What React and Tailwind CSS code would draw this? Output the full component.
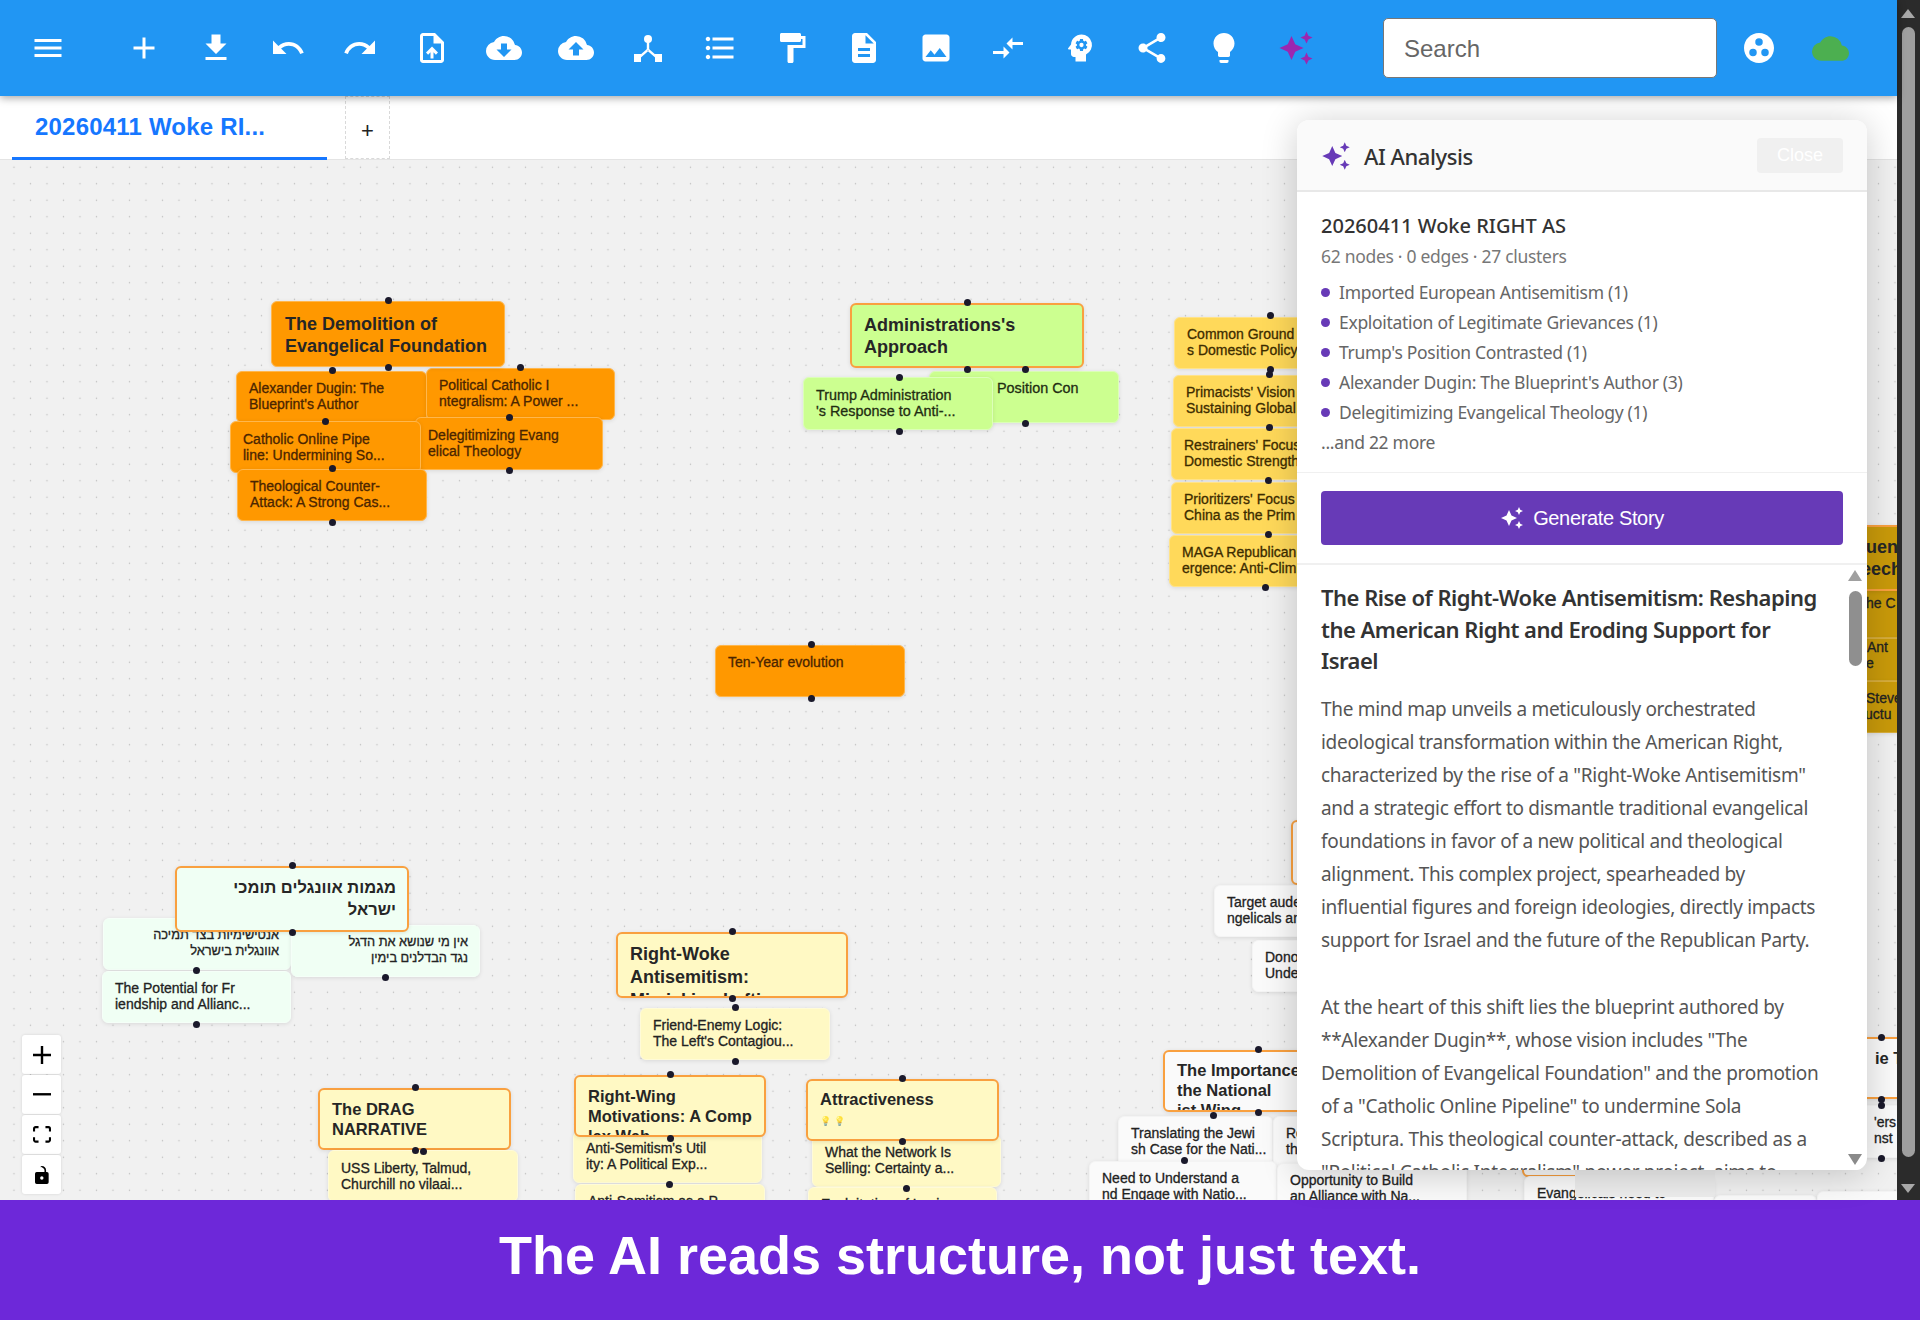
import {
  MdMenu, MdAdd, MdFileDownload, MdUndo, MdRedo, MdOutlineUploadFile, MdCloudDownload, MdCloudUpload,
  MdFormatListBulleted, MdFormatPaint, MdDescription, MdImage, MdCompareArrows, MdPsychology, MdShare,
  MdLightbulb, MdAutoAwesome, MdGroupWork, MdCloud,
} from 'react-icons/md'

const ORANGE = 'bg-[#ff9800] text-[#4a2500] border-[#ffb74d]'
const GREEN = 'bg-[#ccff90] text-[#1f2d12] border-[#dcffb8]'
const AMBER = 'bg-[#ffd95a] text-[#3d2c00] border-[#ffe38a]'
const MINT = 'bg-[#f0fff4] text-[#222] border-[#f5fff8]'
const CREAM = 'bg-[#fff9c4] text-[#222] border-[#fffbd8]'
const PALE = 'bg-[#fafafa] text-[#222] border-[#f4f4f4]'
const GOLD = 'bg-[#c99a0a] text-[#222] border-[#d8ae3c]'

// page coordinates, minus 160 when drawn
const nodes = [
  { x: 236, y: 371, w: 191, h: 52, c: ORANGE, t: ['Alexander Dugin: The', "Blueprint's Author"] },
  { x: 426, y: 368, w: 189, h: 52, c: ORANGE, t: ['Political Catholic I', 'ntegralism: A Power ...'] },
  { x: 415, y: 417, w: 188, h: 53, c: ORANGE, pt: 9, t: ['Delegitimizing Evang', 'elical Theology'] },
  { x: 230, y: 421, w: 191, h: 52, c: ORANGE, pt: 9, t: ['Catholic Online Pipe', 'line: Undermining So...'] },
  { x: 237, y: 469, w: 190, h: 52, c: ORANGE, t: ['Theological Counter-', 'Attack: A Strong Cas...'] },
  { x: 271, y: 301, w: 234, h: 66, c: ORANGE, big: 18, lh: 22, t: ['The Demolition of', 'Evangelical Foundation'] },

  { x: 929, y: 371, w: 190, h: 52, c: GREEN, fs: 14.4, t: ["Trump's Position Con", 'trasted'] },
  { x: 803, y: 377, w: 190, h: 53, c: GREEN, fs: 14.4, pt: 9, t: ['Trump Administration', "'s Response to Anti-..."] },
  { x: 850, y: 303, w: 234, h: 65, c: GREEN, big: 18, lh: 22, sel: true, t: ["Administrations's", 'Approach'] },

  { x: 1174, y: 317, w: 190, h: 52, c: AMBER, t: ['Common Ground', 's Domestic Policy'] },
  { x: 1173, y: 375, w: 190, h: 52, c: AMBER, t: ["Primacists' Vision", 'Sustaining Global'] },
  { x: 1171, y: 428, w: 190, h: 52, c: AMBER, t: ["Restrainers' Focus", 'Domestic Strength'] },
  { x: 1171, y: 482, w: 190, h: 52, c: AMBER, t: ["Prioritizers' Focus", 'China as the Prim'] },
  { x: 1169, y: 535, w: 190, h: 52, c: AMBER, t: ['MAGA Republican', 'ergence: Anti-Clim'] },

  { x: 715, y: 645, w: 190, h: 52, c: ORANGE, t: ['Ten-Year evolution'] },

  { x: 103, y: 918, w: 188, h: 52, c: MINT, rtl: true, fs: 12.8, pr: 11, t: ['אנטישימיות בצד תמיכה', 'אוונגלית בישראל'] },
  { x: 291, y: 925, w: 189, h: 52, c: MINT, rtl: true, fs: 12.8, pr: 11, t: ['אין מי שנושא את הדגל', 'נגד הבדלנים בימין'] },
  { x: 102, y: 971, w: 189, h: 52, c: MINT, t: ['The Potential for Fr', 'iendship and Allianc...'] },
  { x: 175, y: 866, w: 234, h: 66, c: MINT, big: 18, fs: 16.5, lh: 22, sel: true, rtl: true, pt: 8, pr: 11, t: ['מגמות אוונגלים תומכי', 'ישראל'] },

  { x: 616, y: 932, w: 232, h: 66, c: CREAM, big: 18, lh: 23, sel: true, t: ['Right-Woke', 'Antisemitism:', 'Mimicking Lefti'] },
  { x: 640, y: 1008, w: 190, h: 52, c: CREAM, t: ['Friend-Enemy Logic:', "The Left's Contagiou..."] },
  { x: 573, y: 1131, w: 189, h: 52, c: CREAM, t: ["Anti-Semitism's Util", 'ity: A Political Exp...'] },
  { x: 575, y: 1184, w: 190, h: 52, c: CREAM, t: ['Anti-Semitism as a P', 'olitical Tool'] },
  { x: 574, y: 1075, w: 192, h: 62, c: CREAM, big: 16.5, lh: 20, sel: true, t: ['Right-Wing', 'Motivations: A Comp', 'lex Web'] },
  { x: 812, y: 1135, w: 189, h: 52, c: CREAM, t: ['What the Network Is', 'Selling: Certainty a...'] },
  { x: 808, y: 1187, w: 189, h: 52, c: CREAM, t: ['Exploitation of Logi', 'cal Fallacies'] },
  { x: 806, y: 1079, w: 193, h: 62, c: CREAM, big: 16.5, lh: 20, sel: true, pt: 8, bulbs: true, t: ['Attractiveness'] },
  { x: 318, y: 1088, w: 193, h: 62, c: CREAM, big: 16.5, lh: 20, sel: true, t: ['The DRAG', 'NARRATIVE'] },
  { x: 328, y: 1150, w: 190, h: 52, c: CREAM, pt: 9, t: ['USS Liberty, Talmud,', 'Churchill no vilaai...'] },

  { x: 1291, y: 820, w: 190, h: 65, c: PALE, big: 18, lh: 22, sel: true, t: [] },
  { x: 1214, y: 885, w: 190, h: 52, c: PALE, t: ['Target audence: Eva', 'ngelicals and'] },
  { x: 1252, y: 940, w: 190, h: 52, c: PALE, t: ['Donors and Elites', 'Under'] },
  { x: 1163, y: 1050, w: 234, h: 62, c: PALE, big: 16.5, lh: 20, sel: true, pt: 8, t: ['The Importance of', 'the National', 'ist Wing'] },
  { x: 1118, y: 1116, w: 155, h: 52, c: PALE, t: ['Translating the Jewi', 'sh Case for the Nati...'] },
  { x: 1273, y: 1116, w: 150, h: 52, c: PALE, t: ['Re', 'th'] },
  { x: 1089, y: 1161, w: 188, h: 52, c: PALE, t: ['Need to Understand a', 'nd Engage with Natio...'] },
  { x: 1277, y: 1163, w: 190, h: 52, c: PALE, t: ['Opportunity to Build', 'an Alliance with Na...'] },
  { x: 1522, y: 1115, w: 190, h: 62, c: PALE, big: 16.5, lh: 20, sel: true, t: [] },
  { x: 1524, y: 1176, w: 190, h: 52, c: PALE, t: ['Evangelicals need to'] },
  { x: 1575, y: 1140, w: 140, h: 57, flat: 'bg-[#ededed]', t: [] },
  { x: 1714, y: 1195, w: 103, h: 30, c: PALE, t: [] },
  { x: 1817, y: 1191, w: 90, h: 40, c: PALE, t: [] },

  { x: 1730, y: 590, w: 190, h: 48, c: GOLD, pt: 4, ind: [123], t: ['he C'] },
  { x: 1730, y: 638, w: 190, h: 43, c: GOLD, pt: 0, ind: [124, 123], t: ['Ant', 'e'] },
  { x: 1730, y: 681, w: 190, h: 52, c: GOLD, ind: [123, 122], t: ['Steve', 'uctu'] },
  { x: 1730, y: 525, w: 190, h: 66, c: GOLD, big: 18, lh: 22, sel: true, ind: [122, 117], t: ['uen', 'eech'] },

  { x: 1730, y: 1037, w: 190, h: 62, c: PALE, big: 16.5, lh: 20, sel: true, ind: [131], t: ['ie T'] },
  { x: 1730, y: 1105, w: 190, h: 53, c: PALE, ind: [131, 131], t: ["'ers", 'nst'] },
]

const handles = [
  [388, 300], [388, 367], [332, 370], [520, 367], [509, 417], [325, 421], [332, 468], [509, 470], [332, 522],
  [967, 302], [967, 369], [1025, 369], [1025, 423], [899, 377], [899, 431],
  [1270, 315], [1270, 369], [1269, 374], [1269, 427], [1268, 480], [1268, 534], [1265, 587],
  [811, 644], [811, 698],
  [292, 865], [292, 932], [196, 970], [385, 977], [196, 1024],
  [732, 931], [732, 998], [735, 1007], [735, 1061], [670, 1074], [670, 1138], [669, 1184],
  [902, 1078], [902, 1141], [906, 1188],
  [415, 1087], [415, 1150], [423, 1151],
  [1258, 1049], [1258, 1112], [1213, 1115], [1184, 1160],
  [1881, 1037], [1881, 1099], [1881, 1105], [1881, 1158],
]

const storyTitle = [
  'The Rise of Right-Woke Antisemitism: Reshaping',
  'the American Right and Eroding Support for',
  'Israel',
]

const firstPara = [
  'The mind map unveils a meticulously orchestrated',
  'ideological transformation within the American Right,',
  'characterized by the rise of a "Right-Woke Antisemitism"',
  'and a strategic effort to dismantle traditional evangelical',
  'foundations in favor of a new political and theological',
  'alignment. This complex project, spearheaded by',
  'influential figures and foreign ideologies, directly impacts',
  'support for Israel and the future of the Republican Party.',
]

const secondPara = [
  'At the heart of this shift lies the blueprint authored by',
  '**Alexander Dugin**, whose vision includes "The',
  'Demolition of Evangelical Foundation" and the promotion',
  'of a "Catholic Online Pipeline" to undermine Sola',
  'Scriptura. This theological counter-attack, described as a',
  '"Political Catholic Integralism" power project, aims to',
]

const clusters = [
  'Imported European Antisemitism (1)',
  'Exploitation of Legitimate Grievances (1)',
  "Trump's Position Contrasted (1)",
  "Alexander Dugin: The Blueprint's Author (3)",
  'Delegitimizing Evangelical Theology (1)',
]

function TreeIcon() {
  return (
    <svg viewBox="0 0 28 28" className="w-[28px] h-[28px]" fill="white">
      <circle cx="14" cy="5" r="4" />
      <rect x="12.8" y="6" width="2.4" height="10" />
      <path d="M13 15l-8 7 1.6 1.8 8-7zM15 15l8 7-1.6 1.8-8-7z" />
      <rect x="0" y="20" width="7" height="8" />
      <rect x="21" y="20" width="7" height="8" />
    </svg>
  )
}

function ToolIcon({ children }) {
  return <div className="w-[72px] h-[72px] flex items-center justify-center text-white text-[36px]">{children}</div>
}

function Toolbar() {
  return (
    <div className="relative z-20 h-[96px] bg-[#2196f3] flex items-center pl-[12px] shadow-[0_2px_8px_rgba(0,0,0,0.35)]">
      <ToolIcon><MdMenu /></ToolIcon>
      <div className="w-[24px]" />
      <ToolIcon><MdAdd /></ToolIcon>
      <ToolIcon><MdFileDownload /></ToolIcon>
      <ToolIcon><MdUndo /></ToolIcon>
      <ToolIcon><MdRedo /></ToolIcon>
      <ToolIcon><MdOutlineUploadFile /></ToolIcon>
      <ToolIcon><MdCloudDownload /></ToolIcon>
      <ToolIcon><MdCloudUpload /></ToolIcon>
      <ToolIcon><TreeIcon /></ToolIcon>
      <ToolIcon><MdFormatListBulleted /></ToolIcon>
      <ToolIcon><MdFormatPaint /></ToolIcon>
      <ToolIcon><MdDescription /></ToolIcon>
      <ToolIcon><MdImage /></ToolIcon>
      <ToolIcon><MdCompareArrows /></ToolIcon>
      <ToolIcon><MdPsychology /></ToolIcon>
      <ToolIcon><MdShare /></ToolIcon>
      <ToolIcon><MdLightbulb /></ToolIcon>
      <ToolIcon><MdAutoAwesome className="text-[#9c27b0]" /></ToolIcon>
      <input
        placeholder="Search"
        className="ml-[51px] w-[334px] h-[60px] rounded-[5px] border border-[#777] bg-white pl-[20px] pt-[2px] text-[24px] text-[#333] placeholder:text-[#666] outline-none"
      />
      <div className="w-[84px] flex justify-center text-white text-[36px]"><MdGroupWork /></div>
      <div className="w-[58px] flex justify-center text-[#4caf50] text-[37px]"><MdCloud /></div>
    </div>
  )
}

function TabBar() {
  return (
    <div className="relative h-[64px] bg-white flex pl-[12px] border-b border-[#e4e4e4]">
      <div className="w-[315px] h-[64px] border-b-[3px] border-[#1677ff] pl-[23px] pt-[16px] text-[24px] leading-[30px] font-bold text-[#1677ff] tracking-[0.2px]">
        20260411 Woke RI...
      </div>
      <div className="ml-[18px] w-[45px] h-[63px] border border-dashed border-[#d9d9d9] pt-[5px] flex items-center justify-center text-[22px] text-[#222]">
        +
      </div>
    </div>
  )
}

function FlowNode({ n }) {
  const lh = n.lh || 16
  const top = n.pt ?? (n.big ? (n.sel ? 9 : 11) : 8)
  const right = n.pr ?? 12
  const left = n.big && !n.sel ? 13 : 12
  const tone = n.big ? 'text-[#262626]!' : '[-webkit-text-stroke:0.3px]'
  return (
    <div
      className={`absolute overflow-hidden ${n.flat ? n.flat : `rounded-[6px] shadow-[0_1px_4px_rgba(0,0,0,0.1)] ${n.sel ? 'border-2 border-[#f9a03f]!' : 'border'} ${n.c} ${tone}`} ${n.rtl ? 'text-right' : ''}`}
      dir={n.rtl ? 'rtl' : undefined}
      style={{
        left: n.x,
        top: n.y - 160,
        width: n.w,
        height: n.h,
        fontSize: n.fs || n.big || 14,
        lineHeight: lh + 'px',
        fontWeight: n.big ? 700 : undefined,
        padding: `${top}px ${right}px 0 ${left}px`,
      }}
    >
      {n.t.map((line, i) => (
        <div key={line} className="whitespace-nowrap" style={n.ind ? { marginLeft: n.ind[i] } : undefined}>{line}</div>
      ))}
      {n.bulbs && <div className="mt-[6px] text-[9px] leading-[12px] opacity-70">💡 💡</div>}
    </div>
  )
}

function ZoomControls() {
  const btn = 'w-[39px] h-[39px] bg-white flex items-center justify-center rounded-[3px] shadow-[0_0_3px_rgba(0,0,0,0.12)]'
  return (
    <div className="absolute left-[22px] top-[875px] flex flex-col gap-px z-10">
      <div className={btn}>
        <svg viewBox="0 0 32 32" className="w-[18px] h-[18px]"><path d="M32 18.133H18.133V32h-4.266V18.133H0v-4.266h13.867V0h4.266v13.867H32z" /></svg>
      </div>
      <div className={btn}>
        <svg viewBox="0 0 32 5" className="w-[18px] h-[3px]"><path d="M0 0h32v4.2H0z" /></svg>
      </div>
      <div className={btn}>
        <svg viewBox="0 0 32 30" className="w-[18px] h-[17px]"><path d="M3.692 4.63c0-.53.4-.938.939-.938h5.215V0H4.708C2.13 0 0 2.054 0 4.63v5.216h3.692V4.631zM27.354 0h-5.2v3.692h5.17c.53 0 .984.4.984.939v5.215H32V4.631A4.624 4.624 0 0027.354 0zm.954 24.83c0 .532-.4.94-.939.94h-5.215v3.768h5.215c2.577 0 4.631-2.13 4.631-4.707v-5.139h-3.692v5.139zm-23.677.94c-.531 0-.939-.4-.939-.94v-5.138H0v5.139c0 2.577 2.13 4.707 4.708 4.707h5.138V25.77H4.631z" /></svg>
      </div>
      <div className={btn}>
        <svg viewBox="0 0 25 32" className="w-[14px] h-[18px]"><path d="M21.333 10.667H19.81V7.619C19.81 3.429 16.38 0 12.19 0c-4.114 1.828-1.37 2.133.305 2.438 1.676.305 4.42 2.59 4.42 5.181v3.048H3.047A3.056 3.056 0 000 13.714v15.238A3.056 3.056 0 003.048 32h18.285a3.056 3.056 0 003.048-3.048V13.714a3.056 3.056 0 00-3.048-3.047zM12.19 24.533a3.056 3.056 0 01-3.047-3.047 3.056 3.056 0 013.047-3.048 3.056 3.056 0 013.048 3.048 3.056 3.056 0 01-3.048 3.047z" /></svg>
      </div>
    </div>
  )
}

function AiPanel() {
  return (
    <div className="absolute z-10 left-[1297px] top-[120px] w-[570px] h-[1050px] bg-white rounded-[12px] overflow-hidden flex flex-col shadow-[0_4px_36px_rgba(0,0,0,0.2)] font-['Noto_Sans',sans-serif]">
      <div className="h-[72px] shrink-0 bg-[#fafafa] border-b-2 border-[#e8e8e8] flex items-center justify-between pl-[24px] pr-[24px]">
        <div className="flex items-center gap-[13px] pt-[2px]">
          <MdAutoAwesome className="text-[#673ab7] text-[30px]" />
          <span className="text-[22px] font-medium text-[#333] tracking-[-0.45px]">AI Analysis</span>
        </div>
        <div className="w-[86px] h-[35px] rounded-[4px] bg-[#f0f0f0] text-white text-[18px] flex items-center justify-center font-['Liberation_Sans',sans-serif]">Close</div>
      </div>

      <div className="h-[281px] shrink-0 pl-[24px] pr-[24px] pt-[20px] border-b border-[#f0f0f0]">
        <div className="text-[20px] leading-[28px] font-medium text-[#333]">20260411 Woke RIGHT AS</div>
        <div className="mt-[3px] text-[17.5px] leading-[26px] text-[#777] tracking-[-0.3px]">62 nodes · 0 edges · 27 clusters</div>
        <ul className="mt-[8px]">
          {clusters.map((c) => (
            <li key={c} className="h-[30px] flex items-center text-[17.5px] text-[#666] tracking-[-0.3px]">
              <span className="w-[9px] h-[9px] rounded-full bg-[#673ab7] mr-[9px]" />
              {c}
            </li>
          ))}
        </ul>
        <div className="h-[30px] flex items-center text-[17.5px] text-[#666] tracking-[-0.3px]">...and 22 more</div>
      </div>

      <div className="h-[92px] shrink-0 px-[24px] pt-[18px] border-b-2 border-[#f0f0f0]">
        <div className="h-[54px] rounded-[4px] bg-[#673ab7] text-white flex items-center justify-center gap-[9px] text-[20px] tracking-[-0.35px] font-['Liberation_Sans',sans-serif]">
          <MdAutoAwesome className="text-[24px]" />
          Generate Story
        </div>
      </div>

      <div className="relative flex-1 overflow-hidden pl-[24px] pt-[17px]">
        <div className="text-[22px] leading-[31.5px] font-semibold text-[#333] tracking-[-0.5px] whitespace-nowrap">
          {storyTitle.map((l) => <div key={l}>{l}</div>)}
        </div>
        <div className="mt-[16px] text-[19px] leading-[33px] text-[#555] tracking-[-0.3px] whitespace-nowrap">
          {firstPara.map((l) => <div key={l}>{l}</div>)}
          <div className="mt-[34px]">
            {secondPara.map((l) => <div key={l}>{l}</div>)}
          </div>
        </div>
        {/* inner scrollbar */}
        <div className="absolute right-[4px] top-[5px] bottom-[0px] w-[15px] bg-white">
          <div className="w-0 h-0 border-x-[7.5px] border-x-transparent border-b-[11px] border-b-[#a0a0a0]" />
          <div className="mt-[10px] mx-auto w-[13px] h-[75px] rounded-full bg-[#8f8f8f]" />
          <div className="absolute bottom-[5px] left-0 w-0 h-0 border-x-[7.5px] border-x-transparent border-t-[11px] border-t-[#8a8a8a]" />
        </div>
      </div>
    </div>
  )
}

function PageScrollbar() {
  return (
    <div className="relative w-[23px] shrink-0 bg-[#2b2b2b]">
      <div className="absolute left-[4px] top-[9px] w-0 h-0 border-x-[7px] border-x-transparent border-b-[9px] border-b-[#a8a8a8]" />
      <div className="absolute left-[5px] top-[27px] w-[13px] h-[1130px] rounded-full bg-[#9f9f9f]" />
      <div className="absolute left-[4px] top-[1184px] w-0 h-0 border-x-[7px] border-x-transparent border-t-[9px] border-t-[#a8a8a8]" />
    </div>
  )
}

export default function App() {
  return (
    <div className="w-[1920px] h-[1320px] overflow-hidden flex flex-col font-['Liberation_Sans',Arial,sans-serif]">
      <div className="flex h-[1200px] shrink-0">
        <div className="relative flex-1 flex flex-col min-w-0">
          <Toolbar />
          <TabBar />
          <div className="relative flex-1 overflow-hidden bg-[#f1f1f1] bg-[radial-gradient(#bdbdbd_0.8px,transparent_1px)] [background-size:16.5px_16.5px] [background-position:5.75px_-1px]">
            {nodes.map((n, i) => <FlowNode key={i} n={n} />)}
            {handles.map(([x, y], i) => (
              <div key={i} className="absolute w-[7px] h-[7px] rounded-full bg-[#1a192b]" style={{ left: x - 3.5, top: y - 163.5 }} />
            ))}
            <ZoomControls />
          </div>
          <AiPanel />
        </div>
        <PageScrollbar />
      </div>
      <div className="h-[120px] shrink-0 bg-[#6d28d9] pb-[10px] flex items-center justify-center text-white font-bold text-[54px]">
        The AI reads structure, not just text.
      </div>
    </div>
  )
}
